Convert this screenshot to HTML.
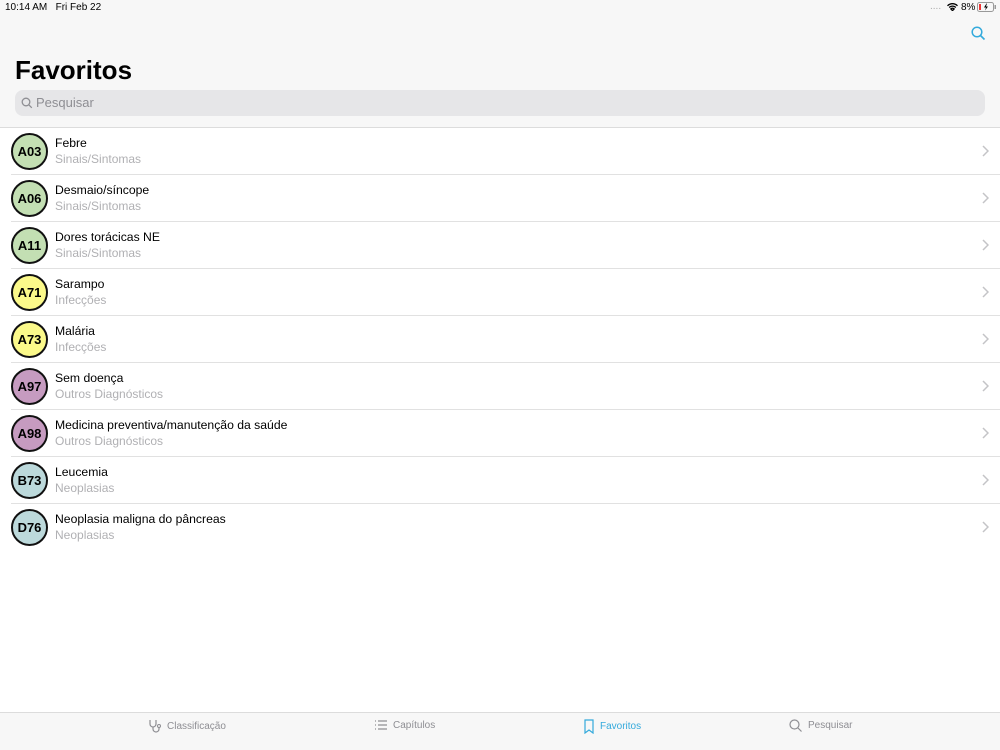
<!DOCTYPE html>
<html><head><meta charset="utf-8"><style>
*{margin:0;padding:0;box-sizing:border-box}
body{width:1000px;height:750px;position:relative;overflow:hidden;background:#fff;font-family:"Liberation Sans",sans-serif;}
.hdr{position:absolute;left:0;top:0;width:1000px;height:128px;background:#f7f7f7;border-bottom:1px solid #dcdcdc}
.st{position:absolute;top:2px;font-size:10px;color:#000}
h1{position:absolute;left:15px;top:55px;font-size:26px;font-weight:bold;color:#000}
.sb{position:absolute;left:15px;top:90px;width:970px;height:26px;background:#e6e6e8;border-radius:8px}
.sb span{position:absolute;left:21px;top:5px;font-size:13px;color:#8e8e93}
.row{position:absolute;left:0;width:1000px;height:47px}
.row .c{position:absolute;left:11px;top:5px;width:37px;height:37px;border:2px solid #111;border-radius:50%;font-weight:bold;font-size:13px;text-align:center;line-height:33px;color:#000}
.row .t{position:absolute;left:55px;top:8px;font-size:12.2px;color:#000}
.row .s{position:absolute;left:55px;top:24px;font-size:12px;color:#b0b0b3}
.row .ln{position:absolute;left:11px;right:0;bottom:0;height:1px;background:#e1e1e1}
.row svg{position:absolute;right:11px;top:17px}
.tab{position:absolute;left:0;top:712px;width:1000px;height:38px;background:#f7f7f7;border-top:1px solid #dcdcdc}
.ti{position:absolute;top:6px;font-size:10px;color:#8e8e93;display:flex;align-items:center;gap:6px}
</style></head><body>
<div class="hdr">
<div class="st" style="left:5px">10:14 AM&nbsp;&nbsp;&nbsp;Fri Feb 22</div>
<div class="st" style="left:930px;color:#aaa;top:1px">....</div>
<svg style="position:absolute;left:947px;top:3px" width="11" height="8" viewBox="0 0 11 8"><path d="M0.5 2.8a7 7 0 0 1 10 0M2.2 4.5a4.6 4.6 0 0 1 6.6 0M5.5 7.6L3.8 5.9a2.4 2.4 0 0 1 3.4 0z" stroke="#000" stroke-width="1.3" fill="none"/></svg>
<div class="st" style="left:961px">8%</div>
<svg style="position:absolute;left:977px;top:2px" width="20" height="10" viewBox="0 0 20 10"><rect x="0.5" y="0.5" width="16" height="9" rx="2" fill="none" stroke="#999"/><rect x="2" y="2" width="2" height="6" fill="#e33"/><rect x="17.5" y="3" width="1.5" height="4" fill="#999"/><path d="M9.5 1.5L7 5.5h2l-1 3 3-4h-2l1-3z" fill="#000"/></svg>
<svg style="position:absolute;left:971px;top:26px" width="15" height="15" viewBox="0 0 15 15"><circle cx="6" cy="6" r="4.8" stroke="#34aadc" stroke-width="1.5" fill="none"/><path d="M9.5 9.5l4 4" stroke="#34aadc" stroke-width="1.6"/></svg>
<h1>Favoritos</h1>
<div class="sb"><svg style="position:absolute;left:6px;top:7px" width="12" height="12" viewBox="0 0 12 12"><circle cx="5" cy="5" r="3.8" stroke="#8e8e93" stroke-width="1.3" fill="none"/><path d="M7.8 7.8l3 3" stroke="#8e8e93" stroke-width="1.3"/></svg><span>Pesquisar</span></div>
</div>

<div class="row" style="top:128px"><div class="c" style="background:#c3dfb3">A03</div><div class="t">Febre</div><div class="s">Sinais/Sintomas</div><svg width="7" height="12" viewBox="0 0 7 12"><path d="M1 1l5 5-5 5" stroke="#c4c4c7" stroke-width="1.5" fill="none"/></svg><div class="ln"></div></div>
<div class="row" style="top:175px"><div class="c" style="background:#c3dfb3">A06</div><div class="t">Desmaio/síncope</div><div class="s">Sinais/Sintomas</div><svg width="7" height="12" viewBox="0 0 7 12"><path d="M1 1l5 5-5 5" stroke="#c4c4c7" stroke-width="1.5" fill="none"/></svg><div class="ln"></div></div>
<div class="row" style="top:222px"><div class="c" style="background:#c3dfb3">A11</div><div class="t">Dores torácicas NE</div><div class="s">Sinais/Sintomas</div><svg width="7" height="12" viewBox="0 0 7 12"><path d="M1 1l5 5-5 5" stroke="#c4c4c7" stroke-width="1.5" fill="none"/></svg><div class="ln"></div></div>
<div class="row" style="top:269px"><div class="c" style="background:#fbf98a">A71</div><div class="t">Sarampo</div><div class="s">Infecções</div><svg width="7" height="12" viewBox="0 0 7 12"><path d="M1 1l5 5-5 5" stroke="#c4c4c7" stroke-width="1.5" fill="none"/></svg><div class="ln"></div></div>
<div class="row" style="top:316px"><div class="c" style="background:#fbf98a">A73</div><div class="t">Malária</div><div class="s">Infecções</div><svg width="7" height="12" viewBox="0 0 7 12"><path d="M1 1l5 5-5 5" stroke="#c4c4c7" stroke-width="1.5" fill="none"/></svg><div class="ln"></div></div>
<div class="row" style="top:363px"><div class="c" style="background:#c69bc0">A97</div><div class="t">Sem doença</div><div class="s">Outros Diagnósticos</div><svg width="7" height="12" viewBox="0 0 7 12"><path d="M1 1l5 5-5 5" stroke="#c4c4c7" stroke-width="1.5" fill="none"/></svg><div class="ln"></div></div>
<div class="row" style="top:410px"><div class="c" style="background:#c69bc0">A98</div><div class="t">Medicina preventiva/manutenção da saúde</div><div class="s">Outros Diagnósticos</div><svg width="7" height="12" viewBox="0 0 7 12"><path d="M1 1l5 5-5 5" stroke="#c4c4c7" stroke-width="1.5" fill="none"/></svg><div class="ln"></div></div>
<div class="row" style="top:457px"><div class="c" style="background:#bcd9db">B73</div><div class="t">Leucemia</div><div class="s">Neoplasias</div><svg width="7" height="12" viewBox="0 0 7 12"><path d="M1 1l5 5-5 5" stroke="#c4c4c7" stroke-width="1.5" fill="none"/></svg><div class="ln"></div></div>
<div class="row" style="top:504px"><div class="c" style="background:#bcd9db">D76</div><div class="t">Neoplasia maligna do pâncreas</div><div class="s">Neoplasias</div><svg width="7" height="12" viewBox="0 0 7 12"><path d="M1 1l5 5-5 5" stroke="#c4c4c7" stroke-width="1.5" fill="none"/></svg></div>

<div class="tab">
<div class="ti" style="left:148px"><svg width="13" height="14" viewBox="0 0 13 14"><path d="M2 1v4a3 3 0 0 0 6 0V1M5 8v2a3 3 0 0 0 6 0V8" stroke="#8e8e93" fill="none" stroke-width="1.2"/><circle cx="11" cy="7" r="1.5" stroke="#8e8e93" fill="none"/></svg>Classificação</div>
<div class="ti" style="left:374px"><svg width="13" height="12" viewBox="0 0 13 12"><path d="M1 2h1M1 6h1M1 10h1M4 2h9M4 6h9M4 10h9" stroke="#8e8e93" stroke-width="1.2"/></svg>Capítulos</div>
<div class="ti" style="left:584px;color:#34aadc"><svg width="10" height="15" viewBox="0 0 10 15"><path d="M1 1h8v13L5 11 1 14z" stroke="#34aadc" fill="none" stroke-width="1.2"/></svg>Favoritos</div>
<div class="ti" style="left:789px"><svg width="13" height="13" viewBox="0 0 13 13"><circle cx="5.5" cy="5.5" r="4.5" stroke="#8e8e93" fill="none" stroke-width="1.2"/><path d="M9 9l3.5 3.5" stroke="#8e8e93" stroke-width="1.2"/></svg>Pesquisar</div>
</div>
</body></html>
